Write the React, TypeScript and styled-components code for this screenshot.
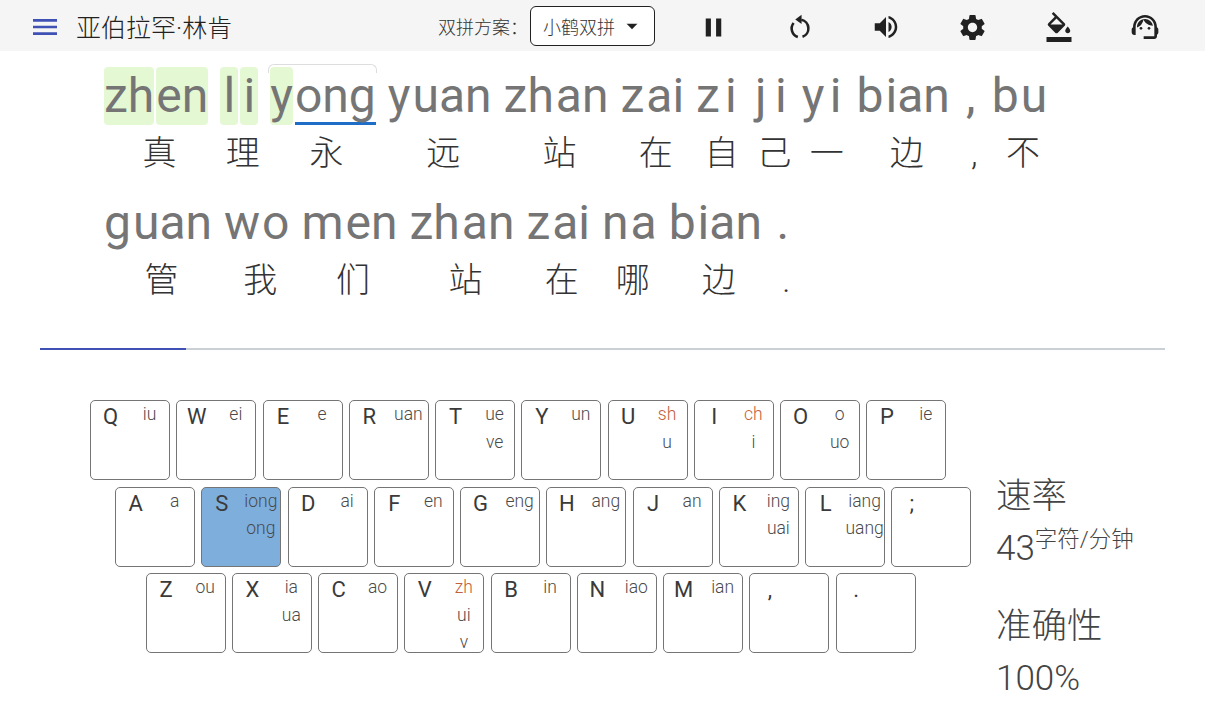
import React from 'react';
import styled, { createGlobalStyle } from 'styled-components';
import { MdMenu, MdPause, MdFormatColorFill, MdSettings, MdVolumeUp, MdOutlineSupportAgent, MdArrowDropDown } from 'react-icons/md';

const GlobalStyle = createGlobalStyle`
  html, body {
    margin: 0;
    padding: 0;
    height: 100%;
    background: #fff;
    overflow: hidden;
    font-family: Roboto, "Noto Sans CJK SC", sans-serif;
    font-weight: 300;
    color: #333;
  }
`;

// top bar
const Bar = styled.header`
  display: flex;
  align-items: center;
  height: 51px;
  background: #f5f5f5;
  box-sizing: border-box;
  padding: 3px 0 0 29px;
`;

const MenuButton = styled.span`
  display: flex;
  width: 32px;
  color: #3f51b5;
  font-size: 32px;
`;

const Title = styled.h1`
  margin: 0 0 2px 15px;
  font-size: 25px;
  font-weight: 300;
  color: #212121;
  flex-grow: 1;
`;

const PlanLabel = styled.span`
  font-size: 18px;
  margin-bottom: 2px;
  color: #333;
`;

const PlanSelect = styled.div`
  display: flex;
  align-items: center;
  box-sizing: border-box;
  width: 125px;
  height: 40px;
  margin: 0 0 2px 2px;
  padding-left: 12px;
  background: #fff;
  border: 1px solid #212121;
  border-radius: 6px;
  font-size: 18px;
  color: #333;
  svg { font-size: 26px; color: #212121; margin-left: 4px; }
`;

const Tools = styled.div`
  display: flex;
  align-items: center;
  margin-left: 44px;
  margin-right: 46px;
  gap: 58.4px;
`;

const Tool = styled.span<{ $size: number }>`
  display: flex;
  justify-content: center;
  width: 28px;
  color: #212121;
  font-size: ${p => p.$size}px;
  svg { flex-shrink: 0; }
`;

// pinyin text
const TextArea = styled.section`
  display: flex;
  flex-wrap: wrap;
  padding: 16px 100px 0 104px;
  row-gap: 13px;
`;

const Token = styled.div<{ $hint?: boolean }>`
  position: relative;
  display: flex;
  flex-direction: column;
  margin-right: 12px;

  ${p => p.$hint && `
    &::before {
      content: '';
      position: absolute;
      top: -3px;
      left: -2px;
      right: -1px;
      height: 8px;
      border: 1px solid #ddd;
      border-bottom: none;
      border-radius: 6px 6px 0 0;
    }
  `}
`;

const Pinyin = styled.div`
  display: flex;
  gap: 2px;
  height: 58px;
  align-items: center;
  font-size: 48px;
  font-weight: 400;
  color: #757575;
`;

const Pair = styled.span<{ $done?: boolean; $active?: boolean }>`
  display: block;
  min-width: 18px;
  height: 58px;
  line-height: 58px;
  text-align: center;
  border-radius: ${p => (p.$active ? '0' : '4px')};
  background: ${p => (p.$done ? '#e5f8d4' : 'transparent')};
  box-sizing: border-box;
  border-bottom: ${p => (p.$active ? '3px solid #1e6ec8' : 'none')};
`;

// the character hangs under its syllable and never widens it
const Hanzi = styled.div`
  display: flex;
  justify-content: center;
  box-sizing: border-box;
  width: 0;
  min-width: 100%;
  padding-left: 7px;
  font-size: 34px;
  line-height: 56px;
  white-space: nowrap;
  color: #333;
`;

// progress
const Progress = styled.div`
  height: 2px;
  margin: 40px 40px 0;
  background: #c9d1d6;
`;

const ProgressFill = styled.div`
  height: 2px;
  background: #3f51b5;
`;

// keyboard + stats
const Lower = styled.section`
  display: flex;
  margin-top: 47px;
`;

const Keyboard = styled.div`
  display: flex;
  flex-direction: column;
  width: 996px;
`;

const KeyRow = styled.div<{ $indent: number }>`
  display: flex;
  margin-left: ${p => p.$indent}px;
`;

const Key = styled.div<{ $hit?: boolean }>`
  display: grid;
  grid-template-columns: 39px 39px;
  box-sizing: border-box;
  width: 80px;
  height: 80px;
  margin: 3.25px 3.125px;
  border: 1px solid #757575;
  border-radius: 5px;
  background: ${p => (p.$hit ? '#7eaedc' : '#fff')};
`;

const Letter = styled.span`
  text-align: center;
  font-size: 22px;
  line-height: 32px;
  font-weight: 400;
  color: #3a3a3a;
`;

const Finals = styled.span`
  display: flex;
  flex-direction: column;
  align-items: center;
`;

const Final = styled.span<{ $initial?: boolean }>`
  font-size: 17.5px;
  line-height: 27.5px;
  white-space: nowrap;
  color: ${p => (p.$initial ? '#c4603a' : '#4a4a4a')};
`;

const Stats = styled.div`
  display: flex;
  flex-direction: column;
  padding-top: 73px;
`;

const StatName = styled.div`
  font-size: 35.5px;
  line-height: 52.5px;
  color: #444;
`;

const StatValue = styled.div`
  font-size: 35px;
  line-height: 52.5px;
  margin-bottom: 25px;
  color: #444;
  sup { font-size: 22.5px; line-height: 0; }
`;

const tokens: [string, string][] = [
  ['zh|en', '真'], ['l|i', '理'], ['y|ong', '永'], ['y|uan', '远'], ['zh|an', '站'],
  ['z|ai', '在'], ['z|i', '自'], ['j|i', '己'], ['y|i', '一'], ['b|ian', '边'],
  [',', ','], ['b|u', '不'],
  ['g|uan', '管'], ['w|o', '我'], ['m|en', '们'], ['zh|an', '站'], ['z|ai', '在'],
  ['n|a', '哪'], ['b|ian', '边'], ['.', '.'],
];

const rows: { indent: number; keys: [string, string[]][] }[] = [
  {
    indent: 86.975,
    keys: [
      ['Q', ['iu']], ['W', ['ei']], ['E', ['e']], ['R', ['uan']], ['T', ['ue', 've']],
      ['Y', ['un']], ['U', ['*sh', 'u']], ['I', ['*ch', 'i']], ['O', ['o', 'uo']], ['P', ['ie']],
    ],
  },
  {
    indent: 111.975,
    keys: [
      ['A', ['a']], ['S', ['iong', 'ong']], ['D', ['ai']], ['F', ['en']], ['G', ['eng']],
      ['H', ['ang']], ['J', ['an']], ['K', ['ing', 'uai']], ['L', ['iang', 'uang']], [';', []],
    ],
  },
  {
    indent: 142.475,
    keys: [
      ['Z', ['ou']], ['X', ['ia', 'ua']], ['C', ['ao']], ['V', ['*zh', 'ui', 'v']], ['B', ['in']],
      ['N', ['iao']], ['M', ['ian']], [',', []], ['.', []],
    ],
  },
];

const App: React.FC = () => {
  return (
    <>
      <GlobalStyle />
      <Bar>
        <MenuButton><MdMenu /></MenuButton>
        <Title>亚伯拉罕·林肯</Title>
        <PlanLabel>双拼方案：</PlanLabel>
        <PlanSelect>小鹤双拼<MdArrowDropDown /></PlanSelect>
        <Tools>
          <Tool $size={31}><MdPause /></Tool>
          <Tool $size={28}>
            <svg width="1em" height="1em" viewBox="-1 0 24 24" fill="none" stroke="currentColor" strokeWidth="2.2">
              <path d="M13 5.8a7.6 7.6 0 0 1 1 14.6" />
              <path d="M10 20.6a7.6 7.6 0 0 1-3.6-12" />
              <path d="M13.2 1.5 7.8 5.6l5.4 3.8z" fill="currentColor" stroke="none" />
            </svg>
          </Tool>
          <Tool $size={30}><MdVolumeUp /></Tool>
          <Tool $size={31}><MdSettings /></Tool>
          <Tool $size={30}><MdFormatColorFill /></Tool>
          <Tool $size={32}><MdOutlineSupportAgent /></Tool>
        </Tools>
      </Bar>

      <TextArea>
        {tokens.map(([py, hz], i) => (
          <Token key={i} $hint={i === 2}>
            <Pinyin>
              {py.split('|').map((part, j) => (
                <Pair key={j} $done={i < 3 && !(i === 2 && j === 1)} $active={i === 2 && j === 1}>{part}</Pair>
              ))}
            </Pinyin>
            <Hanzi>{hz}</Hanzi>
          </Token>
        ))}
      </TextArea>

      <Progress><ProgressFill style={{ width: `${(146 / 1125) * 100}%` }} /></Progress>

      <Lower>
        <Keyboard>
          {rows.map(row => (
            <KeyRow key={row.indent} $indent={row.indent}>
              {row.keys.map(([letter, finals]) => (
                <Key key={letter} $hit={letter === 'S'}>
                  <Letter>{letter}</Letter>
                  <Finals>
                    {finals.map(f => (
                      <Final key={f} $initial={f.startsWith('*')}>{f.replace('*', '')}</Final>
                    ))}
                  </Finals>
                </Key>
              ))}
            </KeyRow>
          ))}
        </Keyboard>
        <Stats>
          <StatName>速率</StatName>
          <StatValue>43<sup>字符/分钟</sup></StatValue>
          <StatName>准确性</StatName>
          <StatValue>100%</StatValue>
        </Stats>
      </Lower>
    </>
  );
};

export default App;
